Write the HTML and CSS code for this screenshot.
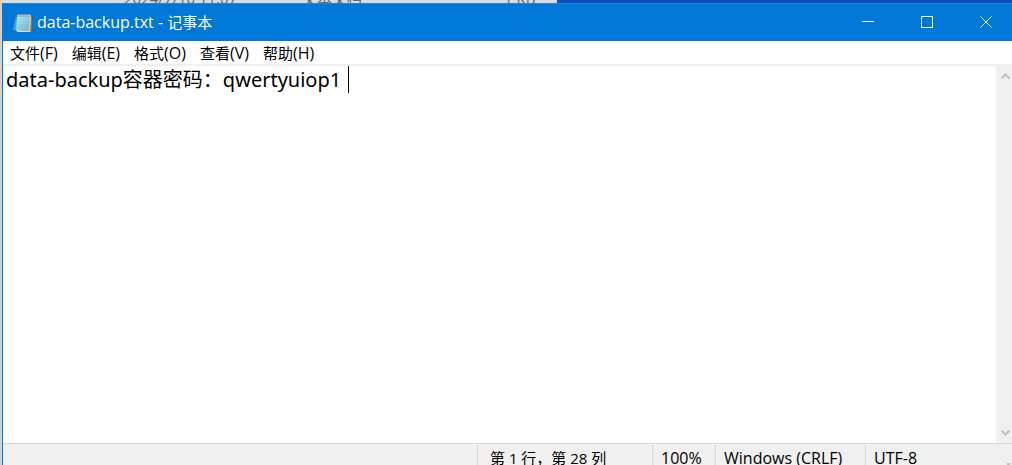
FILE: index.html
```html
<!DOCTYPE html>
<html lang="zh-CN">
<head>
<meta charset="utf-8">
<title>data-backup.txt - 记事本</title>
<link rel="stylesheet" href="styles.css">
</head>
<body>
<div class="desktop">
  <div class="explorer-row">
    <span class="file-cell">2024/7/10 11:07</span>
    <span class="file-cell">文本文档</span>
    <span class="file-cell">1 KB</span>
  </div>
</div>
<main class="window">
  <header class="titlebar">
    <svg class="app-icon" viewBox="0 0 20 20" aria-hidden="true">
      <defs>
        <linearGradient id="page" x1="0" y1="0" x2="1" y2="1">
          <stop offset="0" stop-color="#c5edf3"/>
          <stop offset="1" stop-color="#67b4ce"/>
        </linearGradient>
      </defs>
      <path d="M3 3 L0 17 L5 18 Z" fill="#4aa5cb"/>
      <path d="M5 2H18V19H4Z" fill="#e2dcc4"/>
      <path d="M18 3L19 4V19H17Z" fill="#84795c"/>
      <path d="M4 2H17L16 18H3Z" fill="url(#page)"/>
      <path d="M4 6H16M4 9H16M4 12H16M3 15H16" stroke="#80c2d3" stroke-width=".7"/>
      <path d="M4 2.500H18" stroke="#e8eee9" stroke-width="2"/>
      <path d="M5 1V4M7 1V4M9 1V4M11 1V4M13 1V4M15 1V4M17 1V4" stroke="#596b70" stroke-width=".8"/>
    </svg>
    <h1 class="title"><span class="latin">data-backup.txt - </span>记事本</h1>
    <div class="controls">
      <button class="control" type="button" aria-label="最小化"><svg viewBox="0 0 12 12"><path d="M0 5.500H12"/></svg></button>
      <button class="control" type="button" aria-label="最大化"><svg viewBox="0 0 12 12"><path d="M.5 .5H11.500V11.500H.5Z"/></svg></button>
      <button class="control" type="button" aria-label="关闭"><svg viewBox="0 0 12 12"><path d="M.5 .5L11.500 11.500M11.500 .5L.5 11.500"/></svg></button>
    </div>
  </header>
  <nav class="menubar">
    <button class="menu" type="button">文件<span class="latin">(F)</span></button>
    <button class="menu" type="button">编辑<span class="latin">(E)</span></button>
    <button class="menu" type="button">格式<span class="latin">(O)</span></button>
    <button class="menu" type="button">查看<span class="latin">(V)</span></button>
    <button class="menu" type="button">帮助<span class="latin">(H)</span></button>
  </nav>
  <div class="workspace">
    <div class="editor">
      <textarea class="text" aria-label="文本编辑器" spellcheck="false">data-backup容器密码：qwertyuiop1</textarea>
      <span class="caret"></span>
    </div>
    <div class="scrollbar">
      <button class="arrow" type="button" aria-label="向上滚动"><svg viewBox="0 0 9 7"><path d="M.5 5.500L4.500 1.500L8.500 5.500"/></svg></button>
      <button class="arrow" type="button" aria-label="向下滚动"><svg viewBox="0 0 9 7"><path d="M.5 1.500L4.500 5.500L8.500 1.500"/></svg></button>
    </div>
  </div>
  <footer class="statusbar">
    <span class="status position">第 1 行，第 28 列</span>
    <span class="status zoom latin">100%</span>
    <span class="status ending latin">Windows (CRLF)</span>
    <span class="status encoding latin">UTF-8</span>
    <span class="grip"></span>
  </footer>
</main>
</body>
</html>
```
FILE: styles.css
```css
* { box-sizing: border-box; }

body {
  margin: 0;
  height: 100vh;
  overflow: hidden;
  display: flex;
  flex-direction: column;
  background: #d2d2d2;
  color: #000;
  font-family: "Open Sans", "Noto Sans CJK SC", sans-serif;
  font-size: 15px;
}

button {
  border: 0;
  padding: 0;
  background: none;
  color: inherit;
  font: inherit;
}

.latin { font-size: 16px; }

.desktop {
  flex: none;
  height: 3px;
  overflow: hidden;
  background: #0451bd;
}

.explorer-row {
  display: grid;
  grid-template-columns: 178px 202px 1fr;
  grid-template-rows: 3px;
  align-items: end;
  width: 55%;
  padding-left: 124px;
  background: #dcdcdc;
  color: #666;
  line-height: 16px;
  white-space: nowrap;
}

.file-cell { margin-bottom: -3px; }

.window {
  flex: 1;
  min-height: 0;
  display: flex;
  flex-direction: column;
  margin-left: 2px;
  border-left: 1px solid #0078d7;
  background: #fff;
}

.titlebar {
  flex: none;
  display: flex;
  align-items: center;
  height: 38px;
  padding-left: 10px;
  border-top: 1px solid #1c86d9;
  background: #0078d7;
  color: #fff;
}

.app-icon {
  width: 20px;
  height: 20px;
  margin-right: 4px;
}

.title {
  margin: 0;
  padding-bottom: 2px;
  font-size: 15px;
  font-weight: 400;
  line-height: 20px;
}

.controls {
  display: flex;
  height: 100%;
  margin-left: auto;
  margin-right: -3px;
}

.control {
  display: grid;
  place-items: center;
  width: 59px;
  height: 100%;
  padding-bottom: 2px;
}

.control svg {
  width: 12px;
  height: 12px;
  fill: none;
  stroke: #fff;
}

.menubar {
  flex: none;
  display: flex;
  gap: 14px;
  height: 25px;
  padding-left: 7px;
  border-bottom: 2px solid #f0f0f0;
}

.menu {
  height: 24px;
  line-height: 24px;
  white-space: nowrap;
}

.workspace {
  flex: 1;
  min-height: 0;
  display: flex;
}

.editor {
  position: relative;
  flex: 1;
}

.text {
  display: block;
  width: 100%;
  height: 100%;
  padding: 0 3px;
  border: 0;
  outline: 0;
  resize: none;
  overflow: hidden;
  background: #fff;
  color: #000;
  font: 20px/28px "Noto Sans", "Noto Sans CJK SC", sans-serif;
}

.caret {
  position: absolute;
  left: 345px;
  top: 0;
  width: 1px;
  height: 27px;
  background: #000;
}

.scrollbar {
  display: flex;
  flex-direction: column;
  justify-content: space-between;
  width: 16px;
  background: #f0f0f0;
}

.arrow {
  display: grid;
  place-items: center;
  width: 19px;
  height: 21px;
}

.arrow svg {
  width: 9px;
  height: 7px;
  fill: none;
  stroke: #bfbfbf;
  stroke-width: 2;
}

.statusbar {
  position: relative;
  flex: none;
  display: flex;
  justify-content: flex-end;
  height: 22px;
  padding-top: 1px;
  border-top: 1px solid #d7d7d7;
  background: #f0f0f0;
  overflow: hidden;
}

.status {
  flex: none;
  height: 26px;
  padding-left: 8px;
  border-left: 1px solid #d7d7d7;
  line-height: 26px;
  white-space: nowrap;
}

.position { width: 175px; padding-left: 12px; }
.zoom { width: 63px; }
.ending { width: 150px; }
.encoding { width: 147px; }

.grip {
  position: absolute;
  right: 2px;
  bottom: 0;
  width: 3px;
  height: 2px;
  background: #bfbfbf;
}
```
